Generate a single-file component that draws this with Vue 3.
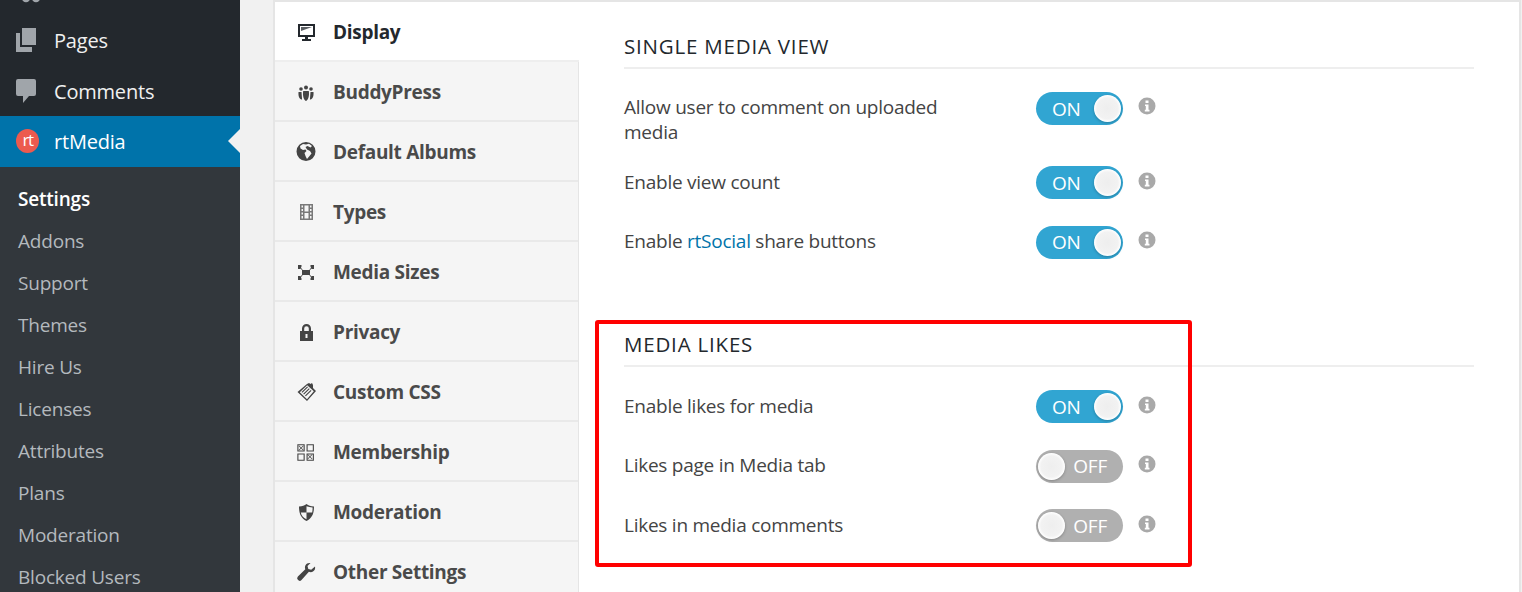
<template>
  <div class="page">
    <aside class="sidebar">
      <div class="cut-row">
        <svg class="cut-icon" viewBox="0 0 26 8"><circle cx="10" cy="-2" r="4.2" /><circle cx="20" cy="-2" r="4.2" /></svg>
      </div>
      <a class="menu-item">
        <svg class="menu-icon" viewBox="0 0 20 24"><path d="M6 0h14v17H6zM0 5h4v14h12v5H0z" /></svg>
        <span>Pages</span>
      </a>
      <a class="menu-item comments">
        <svg class="menu-icon" viewBox="0 0 20 24"><path d="M2 0h16a2 2 0 0 1 2 2v13a2 2 0 0 1-2 2h-5l-6 7v-7H2a2 2 0 0 1-2-2V2a2 2 0 0 1 2-2z" /></svg>
        <span>Comments</span>
      </a>
      <a class="menu-item active">
        <span class="rt-logo">rt</span>
        <span>rtMedia</span>
        <i class="arrow"></i>
      </a>
      <ul class="submenu">
        <li v-for="(item, i) in submenu" :key="item" :class="{ current: i === 0 }">{{ item }}</li>
      </ul>
    </aside>

    <main class="main">
      <div class="panel">
        <nav class="tabs">
          <div v-for="(tab, i) in tabs" :key="tab.label" class="tab" :class="{ selected: i === 0 }">
            <svg class="tab-icon" viewBox="0 0 20 20" v-html="tab.icon"></svg>
            <span class="tab-label">{{ tab.label }}</span>
          </div>
        </nav>

        <section class="content">
          <div v-for="group in groups" :key="group.title" class="group">
            <h3>{{ group.title }}</h3>
            <div
              v-for="row in group.rows"
              :key="row.label"
              class="row"
              :class="{ tall: row.tall }"
            >
              <div class="label">
                {{ row.label }}<a v-if="row.link">{{ row.link }}</a>{{ row.after }}
              </div>
              <div class="switch" :class="row.on ? 'on' : 'off'">
                <span class="knob"></span>
                <span class="state">{{ row.on ? 'ON' : 'OFF' }}</span>
              </div>
              <span class="info">
                <svg viewBox="0 0 18 18"><circle cx="9" cy="9" r="8.5" /><path class="glyph" d="M7.5 3.5h3v2.6h-3zM7 7.4h3.5v5.400h1v1.600H6.800v-1.600h1V9H7z" /></svg>
              </span>
            </div>
          </div>
        </section>
      </div>
      <div class="highlight"></div>
    </main>
  </div>
</template>

<script setup>
const submenu = ['Settings', 'Addons', 'Support', 'Themes', 'Hire Us', 'Licenses', 'Attributes', 'Plans', 'Moderation', 'Blocked Users']

const tabs = [
  { label: 'Display', icon: '<path fill-rule="evenodd" d="M2 3h17v13h-7v2h3v2H6v-2h3v-2H2zM4 5v9h13V5z"/><path d="M5 6h11L5 10z" opacity=".75"/>' },
  { label: 'BuddyPress', icon: '<circle cx="5" cy="8" r="1.8"/><circle cx="10" cy="6.5" r="2"/><circle cx="15" cy="8" r="1.8"/><path d="M2.5 11h3l.6 7.5C4.500 18.500 2 17 2.500 11zM7.200 10h5.600c.8 5-.6 9-2.800 10-2.200-1-3.600-5-2.800-10zM14.500 11h3c.5 6-2 7.500-3.600 7.500z"/>' },
  { label: 'Default Albums', icon: '<path fill-rule="evenodd" d="M10 1a9.500 9.500 0 1 1 0 19 9.500 9.500 0 0 1 0-19zM7 3l-3 2 .5 2.500L7 9l2.500-.5 1 1.500-2 2 1 3 1.500 3 2.500-3 2-2.500-1.500-2.500-3-1.500L9.500 6l2-1 3 1.500L16 5l-3-2.300L10 3.500z"/>' },
  { label: 'Types', icon: '<path fill-rule="evenodd" opacity=".7" d="M4 3h13v16H4zM5.500 4.500v2H7v-2zM5.500 8v2H7V8zM5.500 11.500v2H7v-2zM5.500 15v2.500H7V15zM14 4.500v2h1.500v-2zM14 8v2h1.500V8zM14 11.500v2h1.500v-2zM14 15v2.500h1.500V15zM8.500 4.500v6h4v-6zM8.500 12v5.500h4V12z"/>' },
  { label: 'Media Sizes', icon: '<path d="M6 9h8v5H6z"/><path d="M2 4h3.500v1.500L4.500 8H2zM14.500 4H18v4h-2.500l-1-2.500zM2 15h2.500l1 2.500V19H2zM15.500 15H18v4h-3.500v-1.500z"/><path d="M4 6l3 4M16 6l-3 4M4 17l3-4M16 17l-3-4" stroke="#444" stroke-width=".9" fill="none"/>' },
  { label: 'Privacy', icon: '<path fill-rule="evenodd" d="M6 10V7.500a4.500 4.500 0 0 1 9 0V10h2v10H4V10zM8.200 10h4.600V7.500a2.300 2.300 0 0 0-4.600 0zM9.500 13v4h2v-4z"/>' },
  { label: 'Custom CSS', icon: '<path fill-rule="evenodd" d="M11 3l2-1 1.500 1 1.500-1 1 2v3l3 3-9 10-9.500-9zM3.800 11.200l7.200 7 6.800-8-6.600-6z"/><path d="M5.500 11l5.700-5.500.8.800L6.300 11.800zM7.200 12.700l5.700-5.500.8.800L8 13.500zM9 14.500l5.700-5.500.8.800-5.700 5.500z"/>' },
  { label: 'Membership', icon: '<path fill-rule="evenodd" d="M2 3h8v8H2zM3.200 4.200v5.600h5.600V4.200zM12 3h8v8h-8zM13.200 4.200v5.600h5.600V4.200zM2 13h8v8H2zM3.200 14.200v5.600h5.600v-5.600zM12 13h8v8h-8zM13.200 14.200v5.600h5.600v-5.600z" transform="translate(-.5 .5) scale(.92)"/><path d="M3.500 4.800L5.500 6.800 7.500 4.800 8 5.300 6 7.300 8 9.300 7.500 9.800 5.500 7.800 3.500 9.800 3 9.300 5 7.300 3 5.300zM12.300 13.600L14.300 15.600 16.300 13.600 16.800 14.100 14.800 16.100 16.800 18.100 16.300 18.600 14.300 16.600 12.300 18.600 11.800 18.100 13.800 16.100 11.800 14.100z" transform="translate(-.4 -.3)"/>' },
  { label: 'Moderation', icon: '<path fill-rule="evenodd" d="M10.500 3c2 1.400 4 2.200 7.500 2.400 0 7-1.800 11.800-7.500 14.600C4.800 17.200 3 12.400 3 5.400 6.500 5.200 8.500 4.400 10.500 3zM10.500 5.200v6.300H4.800c.6 3.200 2.500 5.400 5.700 6.800v-6.800h5.700c.3-1.600.4-3 .4-5.100-2.400-.2-4.300-.6-6.100-1.200z"/>' },
  { label: 'Other Settings', icon: '<path d="M19 5.500c.5 2-.2 4-2 5.100-1.300.7-2.800.7-4.100.2L5.500 19a2.300 2.300 0 0 1-3.600-3.400l7.400-7.400c-.5-1.300-.5-2.800.2-4 1-1.800 3-2.600 5-2.100l-3 3 .8 2.900 2.900.8z"/>' }
]

const groups = [
  {
    title: 'SINGLE MEDIA VIEW',
    rows: [
      { label: 'Allow user to comment on uploaded media', on: true, tall: true },
      { label: 'Enable view count', on: true },
      { label: 'Enable ', link: 'rtSocial', after: ' share buttons', on: true }
    ]
  },
  {
    title: 'MEDIA LIKES',
    rows: [
      { label: 'Enable likes for media', on: true },
      { label: 'Likes page in Media tab', on: false },
      { label: 'Likes in media comments', on: false }
    ]
  }
]
</script>

<style scoped>
.page {
  display: flex;
  width: 1522px;
  height: 592px;
  overflow: hidden;
  background: #f1f1f1;
  font-family: "Open Sans", "Noto Sans", sans-serif;
  color: #444;
}

.sidebar {
  width: 240px;
  flex: none;
  background: #32373c;
  color: #f0f0f0;
}

.cut-row {
  height: 15px;
  background: #23282d;
  overflow: hidden;
  padding-left: 16px;
}

.cut-icon {
  display: block;
  width: 26px;
  height: 8px;
  fill: #a0a5aa;
}

.menu-item {
  display: flex;
  align-items: center;
  position: relative;
  height: 50.5px;
  background: #23282d;
  font-size: 20px;
  letter-spacing: -0.2px;
}

.menu-item.comments span {
  padding-top: 1px;
}

.menu-icon {
  width: 20px;
  height: 24px;
  margin: 0 18px 0 16px;
  fill: #a0a5aa;
}

.active {
  background: #0073aa;
  color: #fff;
}

.rt-logo {
  width: 23px;
  height: 24px;
  margin: 0 15px 0 16px;
  border-radius: 50%;
  background: #ec5a4f;
  color: #fff;
  font-size: 17px;
  line-height: 22px;
  letter-spacing: -1.5px;
  text-align: center;
}

.arrow {
  position: absolute;
  right: 0;
  top: 13px;
  border: 12px solid transparent;
  border-right-color: #f1f1f1;
  border-left-width: 0;
}

.submenu {
  list-style: none;
  margin: 0;
  padding: 11px 0 0 18px;
  font-size: 19px;
  letter-spacing: -0.2px;
  color: #b4b9be;
}

.submenu li {
  height: 42px;
  line-height: 42px;
}

.submenu .current {
  color: #fff;
  font-weight: 600;
}

.main {
  flex: 1;
  position: relative;
  padding: 0 1px 0 33px;
  min-width: 0;
}

.panel {
  display: flex;
  height: 620px;
  background: #fff;
  border: 2px solid #e5e5e5;
}

.tabs {
  width: 304px;
  flex: none;
  background: #f5f5f5;
  border-right: 1px solid #e5e5e5;
  box-sizing: border-box;
}

.tab {
  display: flex;
  align-items: center;
  height: 58px;
  border-bottom: 2px solid #e9e9e9;
  font-size: 19px;
  font-weight: 700;
  letter-spacing: -0.3px;
  color: #4a4a4a;
}

.tab-label {
  padding-top: 2px;
}

.tab.selected {
  background: #fff;
  color: #23282d;
  margin-right: -1px;
  border-bottom-color: #eee;
  position: relative;
}

.tab-icon {
  width: 20px;
  height: 20px;
  flex: none;
  margin: 0 17px 0 21px;
  fill: #444;
  overflow: visible;
}

.selected .tab-icon {
  fill: #23282d;
}

.content {
  flex: 1;
  padding: 0 45px;
  min-width: 0;
}

.group {
  height: 298px;
}

h3 {
  margin: 0;
  padding-top: 29px;
  height: 36px;
  box-sizing: content-box;
  border-bottom: 2px solid #eee;
  font-size: 20.5px;
  line-height: 30px;
  font-weight: 400;
  color: #23282d;
  letter-spacing: 0.8px;
}

.row {
  display: flex;
  align-items: center;
  height: 59.5px;
  font-size: 19px;
  letter-spacing: -0.25px;
  color: #444;
}

.row.tall {
  align-items: flex-start;
  height: 84px;
  padding-top: 23px;
  box-sizing: border-box;
}

.row.tall .info {
  margin-top: 5px;
}

.row.tall .label {
  margin-top: 3px;
}

.group .row:nth-child(2):not(.tall) {
  margin-top: 10px;
}

.label {
  width: 412px;
  flex: none;
  padding-right: 80px;
  box-sizing: border-box;
  line-height: 25px;
  margin-top: -1px;
}

.label a {
  color: #0073aa;
}

.switch {
  display: flex;
  align-items: center;
  width: 87px;
  height: 33px;
  flex: none;
  border-radius: 17px;
  box-sizing: border-box;
  padding: 0 2px;
  color: #fff;
  font-size: 19px;
}

.switch.on {
  background: #31a5d2;
  flex-direction: row-reverse;
  justify-content: space-between;
  padding-left: 16px;
}

.switch.off {
  background: #b0b0b0;
  justify-content: space-between;
  padding-right: 16px;
}

.knob {
  width: 27px;
  height: 27px;
  border-radius: 50%;
  background: radial-gradient(circle, #eee 0, #f2f2f2 55%, #fff 70%);
  box-shadow: 0 1px 3px rgba(0, 0, 0, 0.25);
}

.info {
  width: 18px;
  height: 18px;
  margin: -4px 0 0 15px;
}

.info svg {
  display: block;
  width: 18px;
  height: 18px;
  fill: #a9a9a9;
}

.info .glyph {
  fill: #fff;
}

.highlight {
  position: absolute;
  left: 355px;
  top: 320px;
  width: 597px;
  height: 247px;
  box-sizing: border-box;
  border: 4px solid #f00;
  border-radius: 3px;
}
</style>

<style>
html, body {
  margin: 0;
  overflow: hidden;
}
</style>
